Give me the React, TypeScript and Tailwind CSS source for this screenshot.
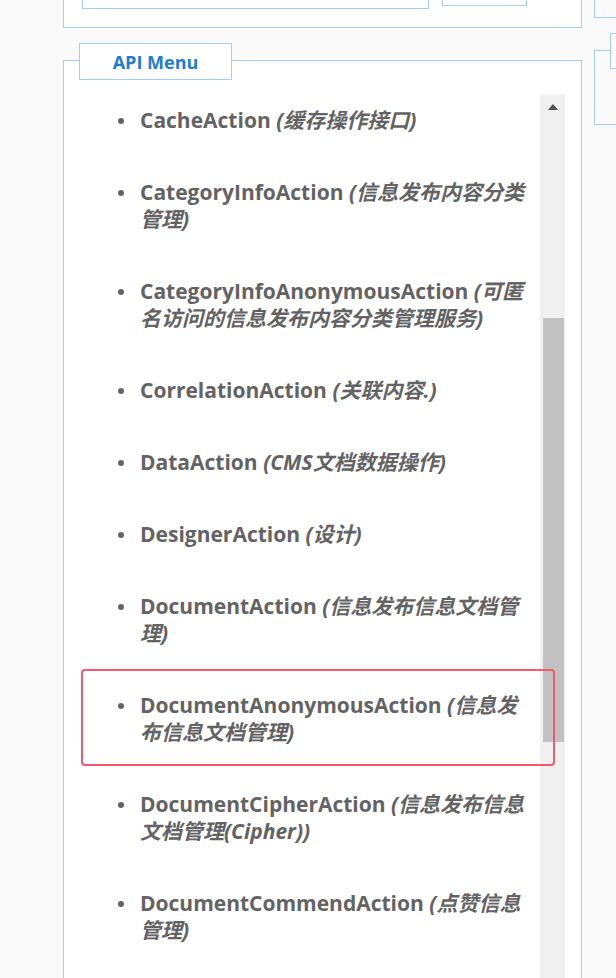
import React from "react";

type Item = { name: string; desc: string; highlight?: boolean };

const items: Item[] = [
  { name: "CacheAction", desc: "(缓存操作接口)" },
  { name: "CategoryInfoAction", desc: "(信息发布内容分类管理)" },
  { name: "CategoryInfoAnonymousAction", desc: "(可匿名访问的信息发布内容分类管理服务)" },
  { name: "CorrelationAction", desc: "(关联内容.)" },
  { name: "DataAction", desc: "(CMS文档数据操作)" },
  { name: "DesignerAction", desc: "(设计)" },
  { name: "DocumentAction", desc: "(信息发布信息文档管理)" },
  { name: "DocumentAnonymousAction", desc: "(信息发布信息文档管理)", highlight: true },
  { name: "DocumentCipherAction", desc: "(信息发布信息文档管理(Cipher))" },
  { name: "DocumentCommendAction", desc: "(点赞信息管理)" },
];

const font = { fontFamily: '"Open Sans", "Noto Sans CJK SC", sans-serif' };

export default function App() {
  return (
    <div
      className="w-[616px] h-[978px] overflow-hidden bg-[#fafafa] flex"
      style={font}
    >
      {/* Left column */}
      <div className="ml-[63px] w-[519px] shrink-0 flex flex-col">
        {/* Top panel (scrolled partly out of view) */}
        <div className="h-[28px] shrink-0 bg-white border-l border-r border-b border-[#a3cdf1] flex items-start pl-[18px]">
          <div className="w-[347px] h-[9px] border-l border-r border-b border-[#a3cdf1]" />
          <div className="ml-[13px] w-[85px] h-[6px] border-l border-r border-b border-[#a3cdf1]" />
        </div>

        {/* API Menu fieldset */}
        <div className="relative mt-[32px] flex-1 bg-white border-l border-r border-t border-[#a3cdf1] px-[16px] pt-[33px] flex">
          <div className="absolute left-[15px] top-[-18px] w-[153px] h-[37px] bg-white border border-[#a3cdf1] flex items-center justify-center">
            <span className="text-[18px] font-bold text-[#1f7bd3] leading-none">API Menu</span>
          </div>

          <div className="flex-1 min-w-0">
            <ul className="pt-[13px]">
              {items.map((it) => (
                <li key={it.name} className="relative flex mb-[45px] text-[21px] leading-[27px] text-[#636363] font-bold">
                  <div className="w-[60px] shrink-0 h-[27px] flex items-center">
                    <span className="ml-[38px] w-[6px] h-[6px] rounded-full bg-[#636363]" />
                  </div>
                  <div className="w-[392px] shrink-0">
                    {it.name} <i className="italic">{it.desc}</i>
                  </div>
                  {it.highlight && (
                    <div className="absolute left-[1px] right-[-15px] top-[-23px] bottom-[-20px] border-2 border-[#f15a6b] rounded-[4px] pointer-events-none" />
                  )}
                </li>
              ))}
            </ul>
          </div>

          {/* Scrollbar */}
          <div className="w-[25px] shrink-0 bg-[#f0f0f0] flex flex-col items-center">
            <div className="h-[24px] w-full flex items-start justify-center pt-[10px]">
              <div className="w-0 h-0 border-l-[5px] border-r-[5px] border-b-[6px] border-l-transparent border-r-transparent border-b-[#505050]" />
            </div>
            <div className="h-[200px] shrink-0" />
            <div className="ml-[1px] w-[21px] h-[424px] shrink-0 bg-[#c1c1c1]" />
          </div>
        </div>
      </div>

      {/* Right column (partially visible) */}
      <div className="ml-[12px] w-[40px] shrink-0 flex flex-col">
        <div className="h-[18px] shrink-0 border-l border-b border-[#a3cdf1]" />
        <div className="relative mt-[32px] h-[75px] shrink-0 border-l border-t border-b border-[#a3cdf1]">
          <div className="absolute left-[15px] top-[-18px] w-[60px] h-[36px] bg-white border border-[#a3cdf1]" />
        </div>
      </div>
    </div>
  );
}
